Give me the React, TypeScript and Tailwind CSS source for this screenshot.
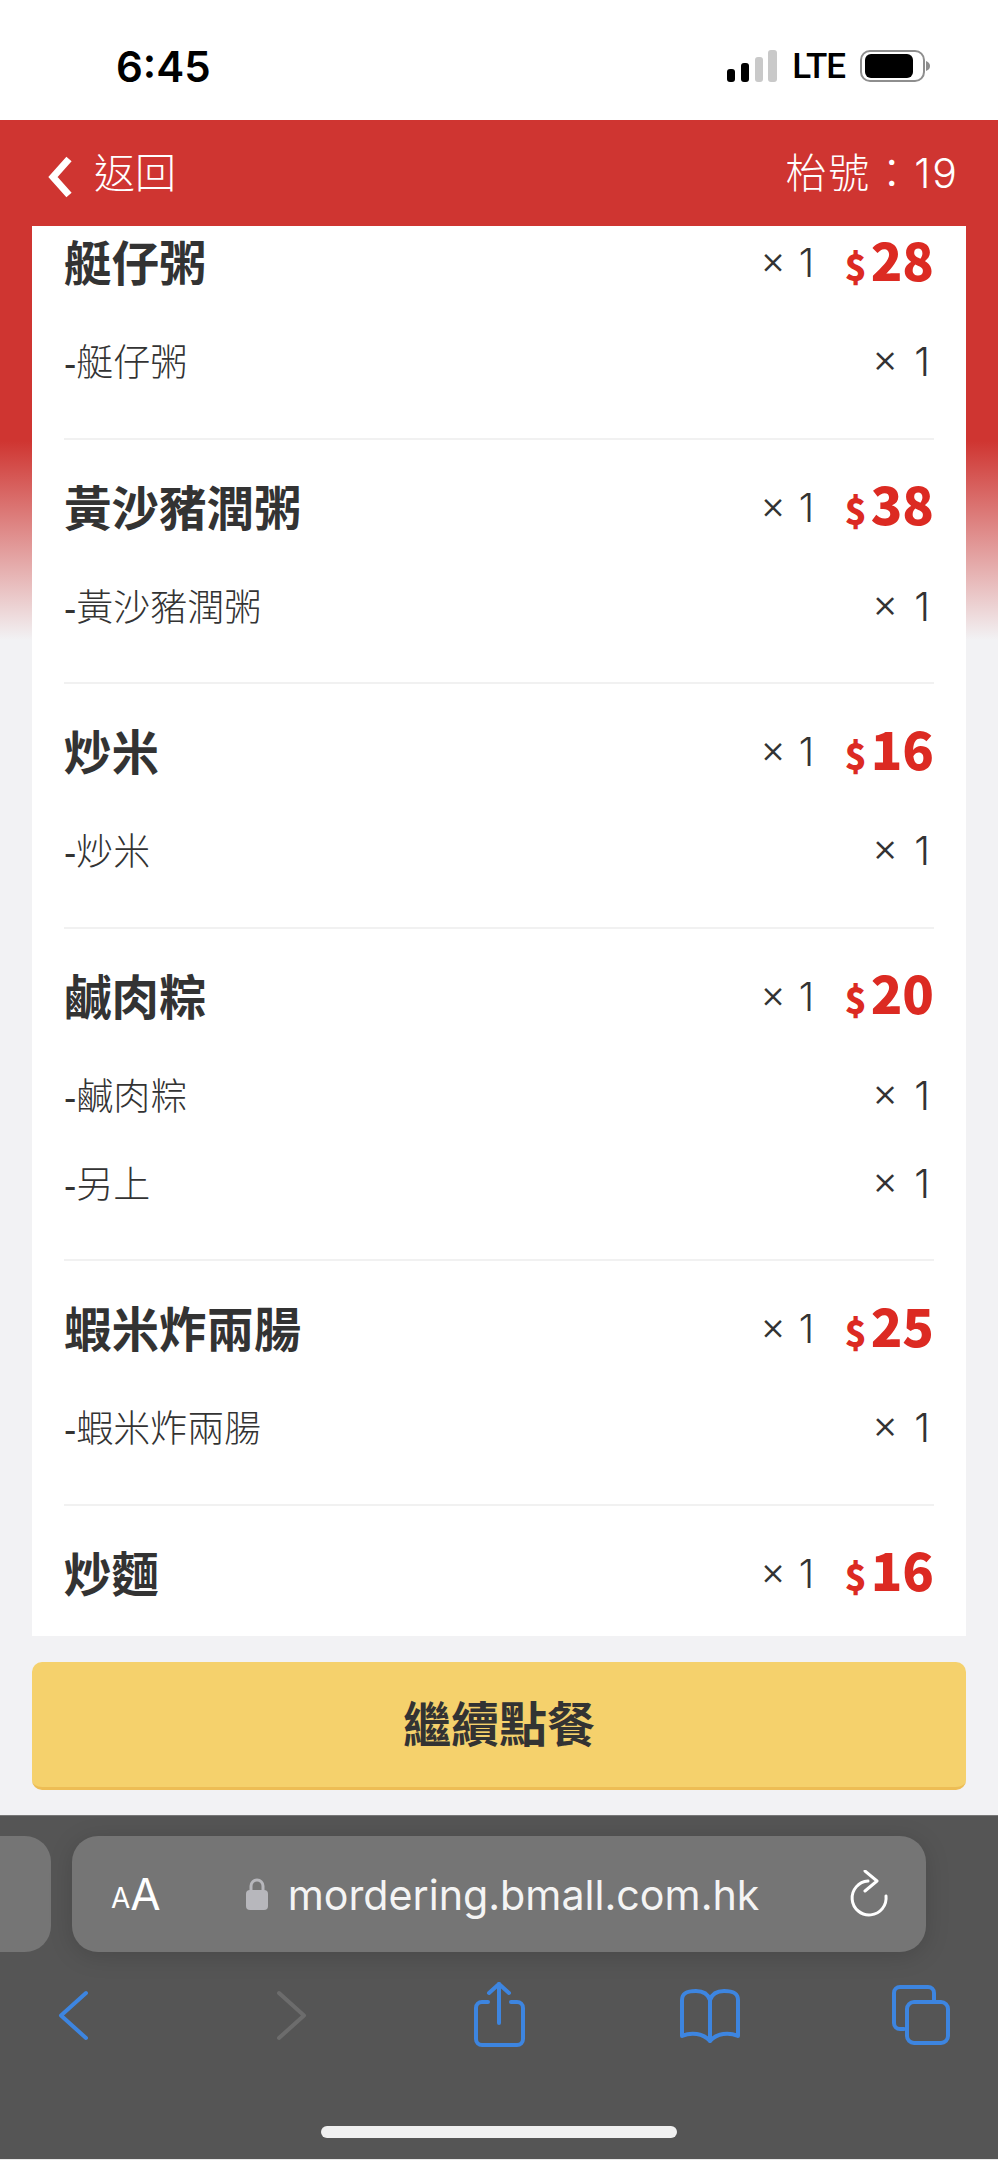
import React from 'react';

interface OrderItem {
  name: string;
  price: number;
  subs: string[];
}

const items: OrderItem[] = [
  { name: '艇仔粥', price: 28, subs: ['-艇仔粥'] },
  { name: '黃沙豬潤粥', price: 38, subs: ['-黃沙豬潤粥'] },
  { name: '炒米', price: 16, subs: ['-炒米'] },
  { name: '鹹肉粽', price: 20, subs: ['-鹹肉粽', '-另上'] },
  { name: '蝦米炸兩腸', price: 25, subs: ['-蝦米炸兩腸'] },
  { name: '炒麵', price: 16, subs: [] },
];

function StatusBar() {
  return (
    <div className="h-[120px] bg-white flex items-start">
      <span className="ml-[116px] mt-[44px] text-[42px] leading-[46px] font-semibold text-black font-['Inter',sans-serif]">6:45</span>
      <div className="ml-auto mr-[68px] mt-[50px] flex items-start">
        {/* signal bars */}
        <svg width="50" height="32" viewBox="0 0 50 32" className="mr-[15px]">
          <rect x="0" y="19" width="8" height="13" rx="3" fill="#000" />
          <rect x="14" y="13" width="8" height="19" rx="3" fill="#000" />
          <rect x="28" y="7" width="8" height="25" rx="3" fill="#c9c9c9" />
          <rect x="41" y="0" width="9" height="32" rx="3" fill="#c9c9c9" />
        </svg>
        <span className="text-[35px] leading-[34px] tracking-[-1px] font-medium text-black font-['Roboto',sans-serif] mr-[15px]">LTE</span>
        {/* battery */}
        <svg width="70" height="32" viewBox="0 0 70 32">
          <rect x="1" y="1" width="63" height="30" rx="9" fill="none" stroke="#8e8e8e" strokeWidth="2" />
          <rect x="5" y="4" width="48" height="24" rx="6" fill="#000" />
          <path d="M66 11 C69 12 70 14 70 16 C70 18 69 20 66 21 Z" fill="#8e8e8e" />
        </svg>
      </div>
    </div>
  );
}

function Header() {
  return (
    <div className="h-[106px] bg-[#cf3531] flex items-center text-white pl-[47px] pr-[39px] font-['Inter','Noto_Sans_CJK_TC',sans-serif] font-light">
      <svg width="26" height="44" viewBox="0 0 26 44" className="mr-[21px] mt-[8px]">
        <path d="M22 4 L6 22 L22 40" fill="none" stroke="#fff" strokeWidth="7" />
      </svg>
      <span className="text-[41px] leading-[50px]">返回</span>
      <span className="ml-auto text-[41px] leading-[50px] tracking-[2px]">枱號：19</span>
    </div>
  );
}

function OrderRow({ item }: { item: OrderItem }) {
  return (
    <div className="mx-[32px] pt-[40px] pb-[29.5px] border-b-[2px] border-[#f1f1f1] last:border-b-0">
      <div className="h-[60px] flex items-center text-[#333]">
        <span className="text-[47.5px] leading-[60px] font-bold">{item.name}</span>
        <span className="ml-auto text-[39px] leading-[60px] font-light font-['Inter',sans-serif] [word-spacing:2px] mr-[30px] -mt-[4px]">× 1</span>
        <span className="w-[90px] -mt-[7px] whitespace-nowrap flex justify-end items-baseline text-[#dc2a22] font-black font-['Noto_Sans_CJK_TC',sans-serif] text-[52px] leading-[60px]">
          <span className="text-[36px] mr-[4px]">$</span>
          {item.price}
        </span>
      </div>
      <div className="mt-[25px]">
        {item.subs.map((sub) => (
          <div key={sub} className="h-[88px] flex items-center justify-between text-[#333] text-[37px] font-light">
            <span>{sub}</span>
            <span className="mr-[4px] -mt-[4px] text-[40px] [word-spacing:5px] font-['Inter',sans-serif]">× 1</span>
          </div>
        ))}
      </div>
    </div>
  );
}

function BrowserBar() {
  return (
    <div className="h-[345px] bg-[#555555] border-t border-[#777] border-b border-b-[#e8e8e8] text-white">
      <div className="pt-[20px] flex gap-[21px]">
        <div className="w-[51px] h-[116px] bg-[#757575] rounded-r-[26px]" />
        <div className="w-[854px] h-[116px] bg-[#757575] rounded-[26px] shadow-[0_4px_24px_rgba(0,0,0,0.15)] flex items-center font-['Inter',sans-serif]">
          <span className="ml-[39px] text-[28px] leading-[40px] mt-[8px]">A</span>
          <span className="text-[44px] leading-[40px] -mt-[1px]">A</span>
          {/* lock */}
          <svg width="24" height="34" viewBox="0 0 24 34" className="ml-[84px]">
            <path d="M6 14 V9 a6 6 0 0 1 12 0 V14" fill="none" stroke="#b7b7bc" strokeWidth="3" />
            <rect x="1" y="13" width="22" height="20" rx="4" fill="#b7b7bc" />
          </svg>
          <span className="ml-[19px] mt-[2px] text-[41.2px] leading-[50px] text-[#f4f4f4]">mordering.bmall.com.hk</span>
          {/* reload */}
          <svg width="40" height="48" viewBox="0 0 40 48" className="ml-auto mr-[36px]">
            <path d="M18 11 A17 17 0 1 0 36 26" fill="none" stroke="#fff" strokeWidth="3" strokeLinecap="round" />
            <path d="M15 1 L27 11 L15 21" fill="none" stroke="#fff" strokeWidth="3" strokeLinecap="round" strokeLinejoin="round" />
          </svg>
        </div>
      </div>
      <div className="mt-[30px] px-[40px] flex justify-between">
        <svg width="66" height="66" viewBox="0 0 66 66">
          <path d="M46 11 L21 33.5 L46 56" fill="none" stroke="#3d85e0" strokeWidth="4" strokeLinecap="round" strokeLinejoin="round" />
        </svg>
        <svg width="66" height="66" viewBox="0 0 66 66">
          <path d="M26 11 L51 33.5 L26 56" fill="none" stroke="#6c6c6c" strokeWidth="4" strokeLinecap="round" strokeLinejoin="round" />
        </svg>
        <svg width="66" height="66" viewBox="0 0 66 66" fill="none" stroke="#3d85e0" strokeWidth="4" strokeLinecap="round" strokeLinejoin="round">
          <path d="M22 20 h-6 a6 6 0 0 0 -6 6 v31 a6 6 0 0 0 6 6 h35 a6 6 0 0 0 6 -6 v-31 a6 6 0 0 0 -6 -6 h-6" />
          <path d="M23 11 L33 2 L43 11" />
          <path d="M33 2 V41" />
        </svg>
        <svg width="66" height="66" viewBox="0 0 66 66" fill="none" stroke="#3d85e0" strokeWidth="4" strokeLinecap="round" strokeLinejoin="round">
          <path d="M31 18 C29 12 24 9 17 9 C10 9 3 10 3 18 V54 C12 50 24 51 31 59" />
          <path d="M31 18 C33 12 38 9 45 9 C52 9 59 10 59 18 V54 C50 50 38 51 31 59" />
          <path d="M31 18 V57" />
        </svg>
        <svg width="66" height="66" viewBox="0 0 66 66" fill="none" stroke="#3d85e0" strokeWidth="4" strokeLinecap="round" strokeLinejoin="round">
          <path d="M12 47 H8 a6 6 0 0 1 -6 -6 V11 a6 6 0 0 1 6 -6 h28 a6 6 0 0 1 6 6 v8" />
          <rect x="15" y="20" width="41" height="41" rx="7" />
        </svg>
      </div>
      <div className="mt-[78px] mx-auto w-[356px] h-[12px] rounded-full bg-[#f0f0f0]" />
    </div>
  );
}

export default function App() {
  return (
    <div className="w-[998px] h-[2160px] overflow-hidden bg-white font-['Liberation_Sans','Noto_Sans_CJK_TC',sans-serif]">
      <StatusBar />
      <Header />
      <div className="h-[1589px] px-[32px] bg-[linear-gradient(to_bottom,#cf3531_0px,#cf3531_215px,#f2f2f4_414px)]">
        <div className="h-[1410px] bg-white overflow-hidden">
          {/* list is scrolled a bit, first row is cut off */}
          <div className="-mt-[31px]">
            {items.map((item) => (
              <OrderRow key={item.name} item={item} />
            ))}
          </div>
        </div>
        <button className="mt-[26px] w-full h-[128px] pt-[3px] rounded-[10px] bg-[#f5d16c] border-b-[3px] border-[#edbd55] text-[#333] text-[48px] font-bold flex items-center justify-center">
          繼續點餐
        </button>
      </div>
      <BrowserBar />
    </div>
  );
}
